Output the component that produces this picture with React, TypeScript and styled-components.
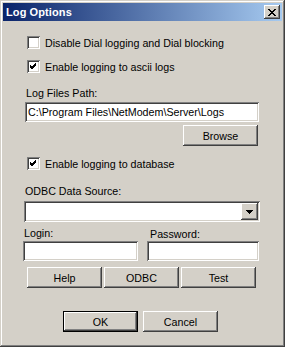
import React from 'react';
import styled, { createGlobalStyle } from 'styled-components';

const GlobalStyle = createGlobalStyle`
  html, body {
    margin: 0;
    padding: 0;
    background: #d4d0c8;
  }
  body {
    font-family: "Liberation Sans", Arial, sans-serif;
    font-size: 11px;
    color: #000;
  }
`;

// classic 3D edges
const raised = `
  box-shadow: inset -1px -1px #404040, inset 1px 1px #ffffff,
    inset -2px -2px #808080, inset 2px 2px #d4d0c8;
`;

const sunken = `
  box-shadow: inset 1px 1px #808080, inset -1px -1px #ffffff,
    inset 2px 2px #404040, inset -2px -2px #d4d0c8;
`;

const Window = styled.div`
  width: 285px;
  height: 347px;
  box-sizing: border-box;
  padding: 3px;
  background: #d4d0c8;
  box-shadow: inset -1px -1px #404040, inset 1px 1px #d4d0c8,
    inset -2px -2px #808080, inset 2px 2px #ffffff;
  display: flex;
  flex-direction: column;
`;

const TitleBar = styled.div`
  height: 18px;
  display: flex;
  align-items: center;
  justify-content: space-between;
  padding: 0 2px 0 3px;
  background: linear-gradient(to right, #0a246a, #a6caf0);
`;

const Title = styled.span`
  color: #fff;
  font-weight: bold;
  font-size: 11px;
  letter-spacing: 0.1px;
`;

const CloseButton = styled.div`
  width: 16px;
  height: 14px;
  background: #d4d0c8;
  ${raised}
  display: flex;
  align-items: center;
  justify-content: center;
`;

const Content = styled.div`
  display: flex;
  flex-direction: column;
`;

const CheckRow = styled.label<{ $top: number }>`
  display: flex;
  align-items: center;
  gap: 5px;
  margin: ${({ $top }) => $top}px 0 0 24px;
  height: 13px;
  font-size: 10.7px;
`;

const CheckBox = styled.span`
  width: 13px;
  height: 13px;
  box-sizing: border-box;
  background: #fff;
  ${sunken}
  display: flex;
  align-items: center;
  justify-content: center;
`;

const Label = styled.div<{ $top: number; $left: number }>`
  margin: ${({ $top, $left }) => `${$top}px 0 0 ${$left}px`};
  height: 13px;
  line-height: 13px;
  font-size: 10.7px;
`;

const Field = styled.div<{ $width: number; $height?: number }>`
  width: ${({ $width }) => $width}px;
  height: ${({ $height }) => $height ?? 20}px;
  box-sizing: border-box;
  background: #fff;
  ${sunken}
  padding: 0 3px;
  display: flex;
  align-items: center;
  font-size: 10.7px;
  white-space: nowrap;
  overflow: hidden;
`;

const FieldWrap = styled.div<{ $top: number; $left: number }>`
  margin: ${({ $top, $left }) => `${$top}px 0 0 ${$left}px`};
  display: flex;
`;

const Combo = styled(Field)`
  padding: 2px;
  justify-content: flex-end;
`;

const DropButton = styled.div`
  width: 17px;
  height: 17px;
  background: #d4d0c8;
  ${raised}
  display: flex;
  align-items: center;
  justify-content: center;
`;

const Button = styled.div<{ $default?: boolean }>`
  width: 75px;
  height: 21px;
  box-sizing: border-box;
  background: #d4d0c8;
  display: flex;
  align-items: center;
  justify-content: center;
  font-size: 10.7px;
  ${({ $default }) =>
    $default
      ? `box-shadow: inset 0 0 0 1px #000, inset -2px -2px #404040, inset 2px 2px #ffffff,
          inset -3px -3px #808080;`
      : raised}
`;

const ButtonRow = styled.div<{ $top: number; $left: number; $gap: number }>`
  display: flex;
  gap: ${({ $gap }) => $gap}px;
  margin: ${({ $top, $left }) => `${$top}px 0 0 ${$left}px`};
`;

const CredRow = styled.div`
  display: grid;
  grid-template-columns: 115px 112px;
  column-gap: 9px;
  margin: 5px 0 0 20px;
`;

const CredLabel = styled.div<{ $shift?: number }>`
  height: 13px;
  line-height: 13px;
  font-size: 10.7px;
  padding-left: ${({ $shift }) => $shift ?? 1}px;
  transform: translateY(${({ $shift }) => ($shift ? 1 : 0)}px);
`;

const CredField = styled(Field)`
  margin-top: 1px;
`;

const Check = () => (
  <svg width="7" height="7" viewBox="0 0 7 7">
    <path d="M0 2 L2 4 L6 0 M0 3 L2 5 L6 1 M0 4 L2 6 L6 2" stroke="#000" strokeWidth="1" fill="none" shapeRendering="crispEdges" />
  </svg>
);

const CloseGlyph = () => (
  <svg width="8" height="7" viewBox="0 0 8 7">
    <path d="M0 0 L7 7 M1 0 L8 7 M7 0 L0 7 M8 0 L1 7" stroke="#000" strokeWidth="1" fill="none" shapeRendering="crispEdges" />
  </svg>
);

const Arrow = () => (
  <svg width="7" height="4" viewBox="0 0 7 4">
    <path d="M0 0 H7 L3.5 4 Z" fill="#000" shapeRendering="crispEdges" />
  </svg>
);

export default function App() {
  return (
    <>
      <GlobalStyle />
      <Window>
        <TitleBar>
          <Title>Log Options</Title>
          <CloseButton>
            <CloseGlyph />
          </CloseButton>
        </TitleBar>
        <Content>
          <CheckRow $top={15}>
            <CheckBox />
            Disable Dial logging and Dial blocking
          </CheckRow>
          <CheckRow $top={11}>
            <CheckBox>
              <Check />
            </CheckBox>
            Enable logging to ascii logs
          </CheckRow>

          <Label $top={14} $left={23}>Log Files Path:</Label>
          <FieldWrap $top={2} $left={22}>
            <Field $width={234}>C:\Program Files\NetModem\Server\Logs</Field>
          </FieldWrap>
          <ButtonRow $top={3} $left={180} $gap={0}>
            <Button>Browse</Button>
          </ButtonRow>

          <CheckRow $top={11}>
            <CheckBox>
              <Check />
            </CheckBox>
            Enable logging to database
          </CheckRow>

          <Label $top={15} $left={22}>ODBC Data Source:</Label>
          <FieldWrap $top={3} $left={21}>
            <Combo $width={236} $height={21}>
              <DropButton>
                <Arrow />
              </DropButton>
            </Combo>
          </FieldWrap>

          <CredRow>
            <CredLabel>Login:</CredLabel>
            <CredLabel $shift={3}>Password:</CredLabel>
            <CredField $width={115}></CredField>
            <CredField $width={112}></CredField>
          </CredRow>

          <ButtonRow $top={6} $left={24} $gap={2}>
            <Button>Help</Button>
            <Button>ODBC</Button>
            <Button>Test</Button>
          </ButtonRow>

          <ButtonRow $top={23} $left={60} $gap={5}>
            <Button $default>OK</Button>
            <Button>Cancel</Button>
          </ButtonRow>
        </Content>
      </Window>
    </>
  );
}
